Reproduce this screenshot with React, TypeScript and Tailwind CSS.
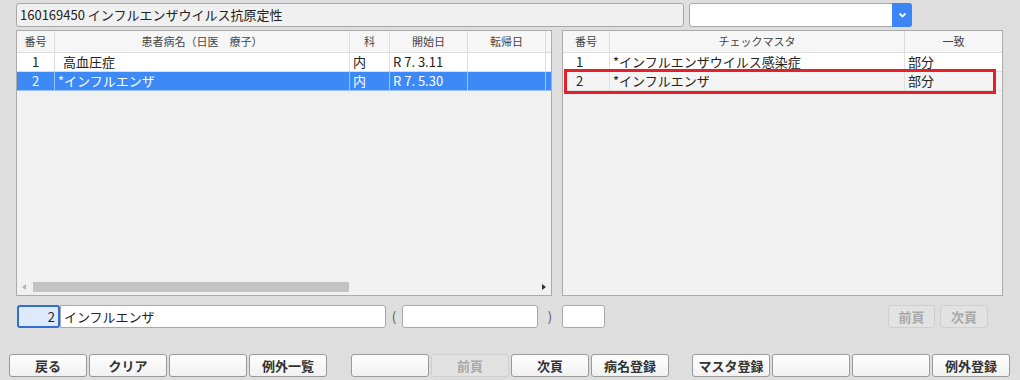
import React from "react";

const font = { fontFamily: '"Noto Sans CJK JP", "Noto Sans", sans-serif' };

const leftRows = [
  { no: "1", name: "高血圧症", ka: "内", start: "R 7. 3.11", end: "" },
  { no: "2", name: "*インフルエンザ", ka: "内", start: "R 7. 5.30", end: "" },
];

const rightRows = [
  { no: "1", name: "*インフルエンザウイルス感染症", match: "部分" },
  { no: "2", name: "*インフルエンザ", match: "部分" },
];

function Btn({ label, disabled, w = "w-[78px]" }: { label?: string; disabled?: boolean; w?: string }) {
  return (
    <div
      className={`${w} h-[23px] shrink-0 rounded-[3px] border flex items-center justify-center text-[13px] font-bold ${
        disabled
          ? "border-[#cfcfcf] bg-[#e2e2e2] text-[#a8a8a8]"
          : "border-[#9a9a9a] bg-gradient-to-b from-white to-[#f1f1f1] text-[#333]"
      }`}
    >
      {label}
    </div>
  );
}

export default function App() {
  return (
    <div className="w-[1020px] h-[380px] bg-[#dedede] text-[#222] overflow-hidden" style={font}>
      {/* top row */}
      <div className="flex pt-[3px] pl-[16px]">
        <div className="w-[668px] h-[24px] rounded-[3px] border border-[#a9a9a9] bg-[#f0f0f0] flex items-center px-[3px] text-[13px]">
          160169450 インフルエンザウイルス抗原定性
        </div>
        <div className="ml-[5px] w-[223px] h-[24px] rounded-[3px] border border-[#a9a9a9] bg-white flex">
          <div className="flex-1" />
          <div className="w-[20px] -my-px -mr-px rounded-r-[3px] bg-[#3d85f7] flex items-center justify-center">
            <svg width="9" height="6" viewBox="0 0 9 6">
              <path d="M1.5 1.5 L4.5 4.5 L7.5 1.5" stroke="white" strokeWidth="1.8" fill="none" />
            </svg>
          </div>
        </div>
      </div>

      {/* tables */}
      <div className="flex mt-[3px] pl-[16px]">
        {/* left table */}
        <div className="w-[536px] h-[266px] border border-[#ababab] bg-[#f1f1f1] flex flex-col">
          <div className="flex h-[22px] bg-[#f6f6f6] border-b border-[#dcdcdc] text-[11px] text-[#444]">
            <div className="w-[38px] flex items-center justify-center border-r border-[#dcdcdc]">番号</div>
            <div className="w-[295px] flex items-center justify-center border-r border-[#dcdcdc]">患者病名（日医　療子）</div>
            <div className="w-[40px] flex items-center justify-center border-r border-[#dcdcdc]">科</div>
            <div className="w-[78px] flex items-center justify-center border-r border-[#dcdcdc]">開始日</div>
            <div className="w-[78px] flex items-center justify-center border-r border-[#dcdcdc]">転帰日</div>
            <div className="flex-1" />
          </div>
          {leftRows.map((r, i) => {
            const sel = i === 1;
            const bc = sel ? "border-[#9cc2fb]" : "border-[#dcdcdc]";
            return (
              <div
                key={r.no}
                className={`flex h-[19px] text-[13px] border-b ${bc} ${sel ? "bg-[#3d8af7] text-white" : "bg-white"}`}
              >
                <div className={`w-[38px] flex items-center justify-center border-r ${bc}`}>{r.no}</div>
                <div className={`w-[295px] flex items-center border-r ${bc} ${sel ? "pl-[3px]" : "pl-[8px]"}`}>{r.name}</div>
                <div className={`w-[40px] flex items-center pl-[3px] border-r ${bc}`}>{r.ka}</div>
                <div className={`w-[78px] flex items-center pl-[3px] border-r ${bc}`}>{r.start}</div>
                <div className={`w-[78px] flex items-center border-r ${bc}`}>{r.end}</div>
                <div className="flex-1" />
              </div>
            );
          })}
          <div className="flex-1" />
          <div className="h-[12px] mb-[2px] flex items-center">
            <svg width="16" height="8" viewBox="0 0 16 8" className="shrink-0">
              <path d="M9 1 L5 4 L9 7 Z" fill="#b5b5b5" />
            </svg>
            <div className="w-[316px] h-[10px] bg-[#c3c3c3]" />
            <div className="flex-1" />
            <svg width="14" height="8" viewBox="0 0 14 8" className="shrink-0">
              <path d="M5 1 L9 4 L5 7 Z" fill="#333" />
            </svg>
          </div>
        </div>

        {/* right table */}
        <div className="ml-[10px] w-[441px] h-[266px] border border-[#ababab] bg-[#f1f1f1] flex flex-col relative">
          <div className="flex h-[22px] bg-[#f6f6f6] border-b border-[#dcdcdc] text-[11px] text-[#444]">
            <div className="w-[47px] flex items-center justify-center border-r border-[#dcdcdc]">番号</div>
            <div className="w-[295px] flex items-center justify-center border-r border-[#dcdcdc]">チェックマスタ</div>
            <div className="flex-1 flex items-center justify-center">一致</div>
          </div>
          {rightRows.map((r, i) => (
            <div
              key={r.no}
              className={`flex h-[19px] text-[13px] border-b border-[#e0e0e0] ${i === 1 ? "bg-[#f4f4f4]" : "bg-white"}`}
            >
              <div className="w-[47px] flex items-center pl-[13px] border-r border-[#e0e0e0]">{r.no}</div>
              <div className="w-[295px] flex items-center pl-[3px] border-r border-[#e0e0e0]">{r.name}</div>
              <div className="flex-1 flex items-center pl-[3px]">{r.match}</div>
            </div>
          ))}
          <div className="absolute left-[1px] top-[38px] w-[432px] h-[25px] border-[3px] border-[#e5202a]" />
        </div>
      </div>

      {/* input row */}
      <div className="flex items-center mt-[9px] pl-[17px] h-[23px] text-[13px]">
        <div className="w-[43px] h-[23px] rounded-[3px] border-2 border-[#2f6fd6] bg-[#ddeafc] flex items-center justify-end pr-[3px]">2</div>
        <div className="w-[326px] h-[23px] rounded-r-[3px] border border-[#a9a9a9] bg-white flex items-center pl-[3px]">インフルエンザ</div>
        <div className="w-[16px] text-center text-[#555]">(</div>
        <div className="w-[136px] h-[23px] rounded-[3px] border border-[#a9a9a9] bg-white" />
        <div className="w-[24px] text-center text-[#555]">)</div>
        <div className="w-[43px] h-[23px] rounded-[3px] border border-[#a9a9a9] bg-white" />
        <div className="ml-[283px] flex gap-[5px]">
          <Btn label="前頁" disabled w="w-[47px]" />
          <Btn label="次頁" disabled w="w-[48px]" />
        </div>
      </div>

      {/* bottom buttons */}
      <div className="flex mt-[26px] pl-[9px] gap-[2px]">
        <Btn label="戻る" />
        <Btn label="クリア" />
        <Btn />
        <Btn label="例外一覧" />
        <div className="w-[20px] shrink-0" />
        <Btn />
        <Btn label="前頁" disabled />
        <Btn label="次頁" />
        <Btn label="病名登録" />
        <div className="w-[19px] shrink-0" />
        <Btn label="マスタ登録" />
        <Btn />
        <Btn />
        <Btn label="例外登録" />
      </div>
    </div>
  );
}
